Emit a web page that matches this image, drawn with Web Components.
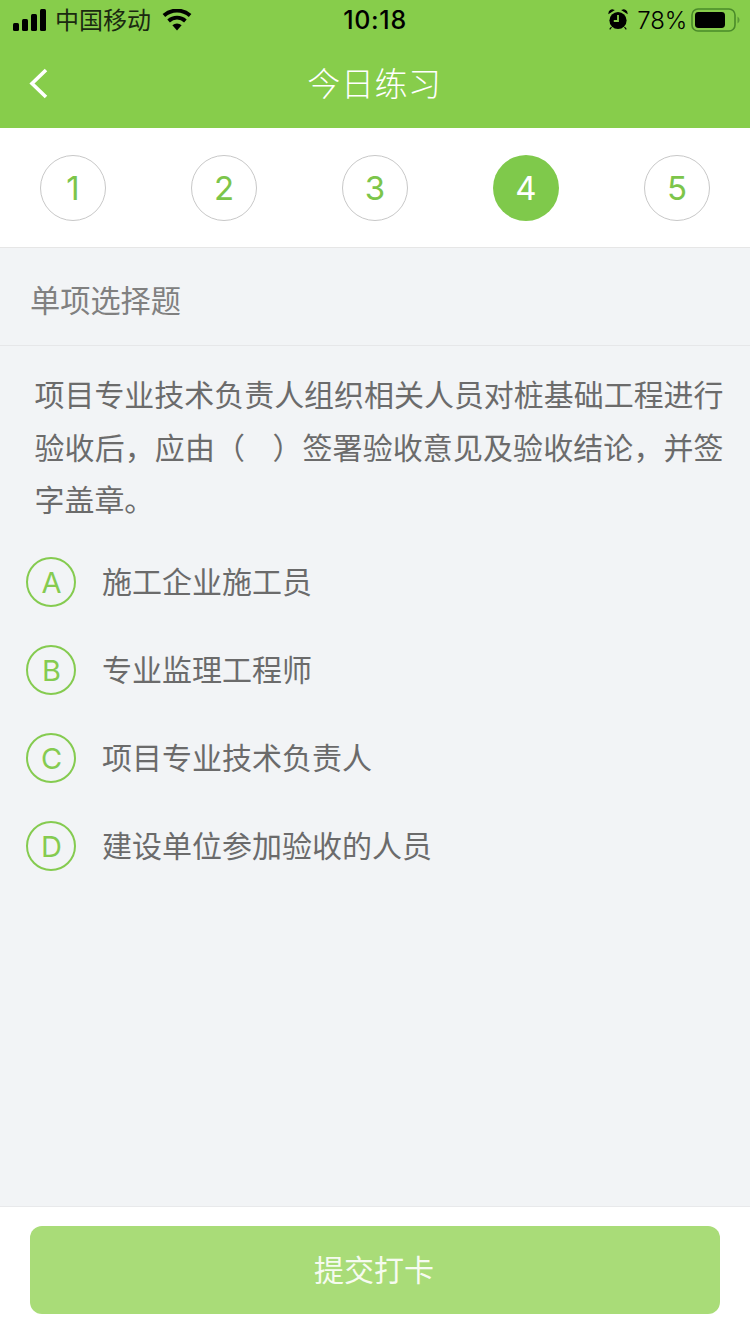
<!DOCTYPE html>
<html lang="zh-CN"><head><meta charset="utf-8"><title>今日练习</title>
<style>
html,body{margin:0;padding:0;height:1334px;overflow:hidden;background:#f2f4f6;font-family:"Noto Sans CJK SC","Liberation Sans",sans-serif}
body{display:flex;flex-direction:column}
</style></head><body>
<app-header></app-header>
<step-bar></step-bar>
<quiz-body>
  <quiz-option letter="A">施工企业施工员</quiz-option>
  <quiz-option letter="B">专业监理工程师</quiz-option>
  <quiz-option letter="C">项目专业技术负责人</quiz-option>
  <quiz-option letter="D">建设单位参加验收的人员</quiz-option>
</quiz-body>
<submit-bar></submit-bar>
<script>
function def(name,html,init){customElements.define(name,class extends HTMLElement{constructor(){super();this.attachShadow({mode:'open'}).innerHTML=html;if(init)init(this)}connectedCallback(){if(this.onConn)this.onConn()}})}
def('app-header',`<style>
:host{display:block;height:128px;background:#87cd4b;color:#000;flex:none}
.st{height:40px;display:grid;grid-template-columns:1fr auto 1fr;align-items:center;padding:0 7px 0 13px;font-family:"Inter","Liberation Sans",sans-serif}
.l,.r{display:flex;align-items:center}
.l{font:400 24px "Noto Sans CJK SC",sans-serif;gap:12px}
.l span{margin:-3px -1px 0 -4px;font-weight:400;color:#1a2a10}
.t{font-size:25px;font-weight:500;letter-spacing:.7px;margin-left:-6px}
.r{justify-content:flex-end;font-size:24px;font-weight:400}
.n{height:88px;display:flex;align-items:center;justify-content:center;position:relative;color:#fff;font-size:33px;letter-spacing:.6px;font-weight:300}
.n svg{position:absolute;left:28px;top:27px}
.n span{margin:-4px 0 0 -1px}
</style>
<div class="st"><div class="l">
<svg width="34" height="22" viewBox="0 0 34 22"><rect x="0" y="14" width="6" height="8" rx="1.5"/><rect x="9" y="10" width="6" height="12" rx="1.5"/><rect x="18" y="5" width="6" height="17" rx="1.5"/><rect x="27" y="0" width="6" height="22" rx="1.5"/></svg>
<span>中国移动</span>
<svg width="30" height="22" viewBox="0 0 30 22"><path d="M15 21.5l-4.6-5.2a6.6 6.6 0 0 1 9.2 0z"/><path d="M7.9 13.4l-2.6-3a14.4 14.4 0 0 1 19.4 0l-2.6 3a10.4 10.4 0 0 0-14.2 0z"/><path d="M3.2 8.1L.6 5.1a21.6 21.6 0 0 1 28.8 0l-2.6 3a17.6 17.6 0 0 0-23.6 0z"/></svg>
</div><div class="t">10:18</div><div class="r">
<svg width="20" height="22" viewBox="0 0 20 22" style="margin-right:9px"><circle cx="10" cy="11.5" r="8.6"/><path d="M1 4.2a3.4 3.4 0 0 1 4.6-3zM19 4.2a3.4 3.4 0 0 0-4.6-3zM3.5 18l-1.8 2.4M16.5 18l1.8 2.4" stroke="#000" stroke-width="1.2"/><path d="M10 6v6H5.8" fill="none" stroke="#87cd4b" stroke-width="1.8"/></svg>
<span style="font-weight:300;letter-spacing:-.2px">78%</span>
<svg width="52" height="24" viewBox="0 0 52 24" style="margin-left:4px"><rect x="1" y="1" width="43" height="22" rx="6" fill="none" stroke="#4a8a2a" stroke-width="1.6"/><rect x="4" y="4" width="30" height="16" rx="3.4"/><path d="M46.5 8.5a4 4 0 0 1 0 7z" fill="#5a9a35"/></svg>
</div></div>
<div class="n"><svg width="22" height="34" viewBox="0 0 22 34"><path d="M18 3L4 16.5 18 30" fill="none" stroke="#fff" stroke-width="3.6"/></svg><span>今日练习</span></div>`);
def('step-bar',`<style>
:host{display:flex;justify-content:space-between;flex:none;box-sizing:border-box;height:120px;padding:27px 40px 0;background:#fff;border-bottom:1px solid #e6e6e6}
b{box-sizing:border-box;width:66px;height:66px;border-radius:50%;border:1px solid #c8c8c8;color:#7cc54a;font:400 33px/64px "Inter","Liberation Sans",sans-serif;text-align:center}
b.on{background:#7fc94b;border:0;color:#fff;line-height:66px}
</style><b>1</b><b>2</b><b>3</b><b class="on">4</b><b>5</b>`);
def('quiz-body',`<style>
:host{display:flex;flex-direction:column;flex:1;min-height:0;background:#f2f4f6;color:#6b6b6b}
.ty{box-sizing:border-box;height:98px;padding-left:30px;border-bottom:1px solid #e6e7e9;font-size:30.2px;line-height:103px;color:#808080;overflow:hidden;font-weight:400}
.q{margin:0;padding:21px 26.5px 0 34.5px;font-size:29.95px;line-height:52.7px;color:#6b6b6b;font-weight:400;text-align:justify}
.o{display:flex;flex-direction:column;gap:38px;padding:32px 0 0 26px}
</style><div class="ty">单项选择题</div>
<p class="q">项目专业技术负责人组织相关人员对桩基础工程进行验收后，应由（&nbsp;&nbsp;&nbsp;&nbsp;）签署验收意见及验收结论，并签字盖章。</p>
<div class="o"><slot></slot></div>`);
def('quiz-option',`<style>
:host{display:flex;align-items:center;height:50px;gap:26px;font-size:30px;color:#6b6b6b}
i{box-sizing:border-box;width:50px;height:50px;border:2px solid #85cb50;border-radius:50%;color:#85cb50;font:400 29px/47px "Inter","Liberation Sans",sans-serif;text-align:center;padding-left:1px}
span{margin-top:-4px}
</style><i></i><span><slot></slot></span>`,el=>{el.onConn=()=>{el.shadowRoot.querySelector('i').textContent=el.getAttribute('letter')}});
def('submit-bar',`<style>
:host{display:block;flex:none;box-sizing:border-box;height:128px;padding:19px 30px 0;background:#fff;border-top:1px solid #e8e9eb}
div{height:88px;border-radius:12px;background:#a9dc78;color:#f6fbf0;font-size:30px;line-height:84px;text-align:center;padding-right:2px;box-sizing:border-box}
</style><div>提交打卡</div>`);
</script>
</body></html>
